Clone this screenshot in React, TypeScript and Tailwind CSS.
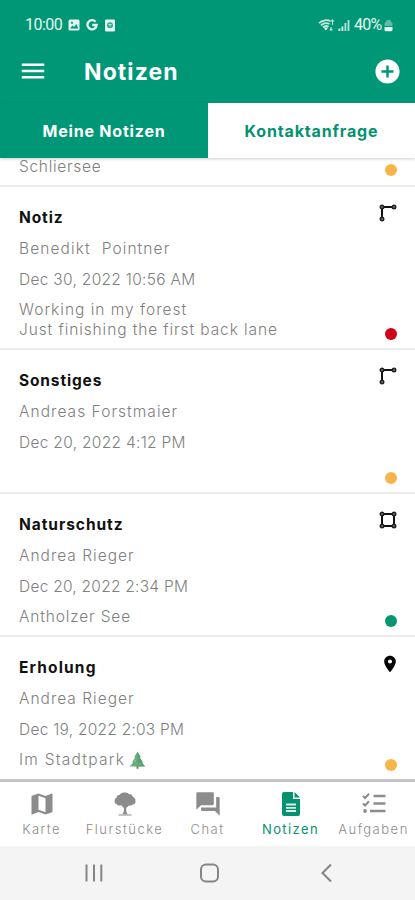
import React from 'react';
import { MdAddCircle, MdForum, MdLocationOn, MdMap, MdMenu } from 'react-icons/md';

interface Note {
  title: string;
  titleClass: string;
  author: string;
  authorClass: string;
  date: string;
  dateClass: string;
  lines: { text: string; className: string; tree?: boolean }[];
  shape: 'line' | 'area' | 'point';
  dot: string;
  height: string;
}

const notes: Note[] = [
  {
    title: 'Notiz',
    titleClass: 'tracking-[0.9px]',
    author: 'Benedikt  Pointner',
    authorClass: 'tracking-[1.1px]',
    date: 'Dec 30, 2022 10:56 AM',
    dateClass: 'tracking-[0.3px]',
    lines: [
      { text: 'Working in my forest', className: 'tracking-[1px]' },
      { text: 'Just finishing the first back lane', className: 'tracking-[0.9px]' },
    ],
    shape: 'line',
    dot: 'bg-[#d00018]',
    height: 'h-[163px]',
  },
  {
    title: 'Sonstiges',
    titleClass: 'tracking-[0.85px]',
    author: 'Andreas Forstmaier',
    authorClass: 'tracking-[1.05px]',
    date: 'Dec 20, 2022 4:12 PM',
    dateClass: 'tracking-[0.3px]',
    lines: [],
    shape: 'line',
    dot: 'bg-[#f9b54c]',
    height: 'h-[144px]',
  },
  {
    title: 'Naturschutz',
    titleClass: 'tracking-[0.95px]',
    author: 'Andrea Rieger',
    authorClass: 'tracking-[1px]',
    date: 'Dec 20, 2022 2:34 PM',
    dateClass: 'tracking-[0.25px]',
    lines: [{ text: 'Antholzer See', className: 'tracking-[0.85px]' }],
    shape: 'area',
    dot: 'bg-[#04976f]',
    height: 'h-[143px]',
  },
  {
    title: 'Erholung',
    titleClass: 'tracking-[1.15px]',
    author: 'Andrea Rieger',
    authorClass: 'tracking-[1px]',
    date: 'Dec 19, 2022 2:03 PM',
    dateClass: 'tracking-[0.25px]',
    lines: [{ text: 'Im Stadtpark', className: 'tracking-[1.25px]', tree: true }],
    shape: 'point',
    dot: 'bg-[#f9b54c]',
    height: 'h-[144px]',
  },
];

const StatusBar: React.FC = () => (
  <div className="flex h-[50px] items-center justify-between pl-[25px] pr-[22px] font-[Roboto,sans-serif] text-[16px] text-[#e4f6f0]">
    <div className="flex items-center">
      <span className="w-[38px] tracking-[-0.5px]">10:00</span>
      <svg className="ml-[5px] h-3 w-[12px]" viewBox="0 0 12 12">
        <rect x="0.5" y="0.5" width="11" height="11" rx="1.5" fill="currentColor" />
        <path d="M2 9.5 4.5 6.5 6 8 8.3 5 10.3 9.5Z" fill="#009777" />
        <circle cx="4" cy="3.8" r="1.1" fill="#009777" />
      </svg>
      <svg className="ml-[6px] h-3 w-[12px]" viewBox="0 0 12 12">
        <path d="M9.6 2.7A4.6 4.6 0 1 0 10.7 6H6.2" fill="none" stroke="currentColor" strokeWidth="2.3" />
      </svg>
      <svg className="ml-[6px] h-[13px] w-[12px]" viewBox="0 0 12 13">
        <rect x="1" y="0.5" width="10" height="12" rx="1.2" fill="currentColor" />
        <circle cx="6" cy="6.2" r="3" fill="#27a78b" />
        <path d="M4.3 5.6h3.4M6 4.6v3.2" stroke="#e4f6f0" strokeWidth="0.8" />
      </svg>
    </div>
    <div className="flex items-center">
      <svg className="h-[14px] w-[17px]" viewBox="0 0 17 14">
        <path d="M1 5.2C4.5 1.8 9.5 1.5 12.5 3.2M3 7.3C6 4.7 9 4.6 11.5 6M5 9.3c2-1.6 4-1.6 5.5-.5" fill="none" stroke="currentColor" strokeWidth="1.8" opacity=".85" />
        <path d="m5.5 9.5 2.4 3 2.2-3Z" fill="currentColor" />
        <path d="M14.5 2v5M13 3.5l1.5-1.7L16 3.5M13 9v3M11.8 10.8 13 12.4l1.3-1.6" fill="none" stroke="currentColor" strokeWidth="1.1" opacity=".8" />
      </svg>
      <svg className="ml-[3px] h-[12px] w-[12px]" viewBox="0 0 12 12">
        <path d="M.5 9.5h1.8V12H.5zM3.5 7.5h1.8V12H3.5z" fill="currentColor" />
        <path d="M6.5 4h1.8v8H6.5zM9.6 1h1.8v11H9.6z" fill="currentColor" opacity=".8" />
      </svg>
      <span className="ml-[4px] w-[30px] tracking-[-0.8px]">40%</span>
      <svg className="h-[13px] w-[9px]" viewBox="0 0 9 13">
        <path d="M.5 7V4.5L2.5 2V1h4v1l2 2.500V7Z" fill="currentColor" opacity=".4" />
        <path d="M.5 8h8v2.800a1.500 1.500 0 0 1-1.500 1.500H2A1.500 1.500 0 0 1 .5 10.800Z" fill="currentColor" />
      </svg>
    </div>
  </div>
);

const ShapeIcon: React.FC<{ shape: Note['shape'] }> = ({ shape }) => {
  if (shape === 'point') {
    return <MdLocationOn className="-mr-[3px] h-5 w-5 text-black" />;
  }
  const isArea = shape === 'area';
  return (
    <svg className="h-[18px] w-[18px]" viewBox="0 0 18 18" fill="none" stroke="#111">
      <path d={isArea ? 'M3 3H15V15H3Z' : 'M15 3H3V15'} strokeWidth="2" />
      <g fill="#666" stroke="#222" strokeWidth="1.4">
        <circle cx="3" cy="3" r="1.8" />
        <circle cx="15" cy="3" r="1.8" />
        <circle cx="3" cy="15" r="1.8" />
        {isArea && <circle cx="15" cy="15" r="1.8" />}
      </g>
    </svg>
  );
};

const PineTree: React.FC = () => (
  <svg className="ml-[4px] inline-block h-[18px] w-[17px] align-[-4px]" viewBox="0 0 17 18">
    <path d="M7.5 14h2v3.7h-2z" fill="#8d7056" />
    <path d="M8.500.5 11.700 6l-1 .2 3.300 5-1.200.2 3.400 4.100H.8l3.400-4.100-1.200-.2 3.300-5-1-.2Z" fill="#67ad82" />
    <path d="M8.500 1v14.500H16L12.800 11.400l1-.2-3.100-5 1-.2Z" fill="#4c966c" opacity=".55" />
    <circle cx="6" cy="10" r=".8" fill="#d2bd68" />
    <circle cx="10.5" cy="13" r=".8" fill="#d2bd68" />
  </svg>
);

const NoteRow: React.FC<{ note: Note }> = ({ note }) => (
  <div className={`flex shrink-0 justify-between border-b-2 border-[#ececec] pl-[19px] pr-[18px] ${note.height}`}>
    <div className="whitespace-pre pt-[15px] text-[15.5px] font-light leading-[31px] text-[#808080]">
      <h2 className={`text-[15.5px] font-bold text-[#111] ${note.titleClass}`}>{note.title}</h2>
      <p className={note.authorClass}>{note.author}</p>
      <p className={note.dateClass}>{note.date}</p>
      <div className="pt-[5px] leading-5">
        {note.lines.map((line) => (
          <p key={line.text} className={line.className}>
            {line.text}
            {line.tree && <PineTree />}
          </p>
        ))}
      </div>
    </div>
    <div className="flex flex-col items-end justify-between pb-[8px] pt-[17px]">
      <ShapeIcon shape={note.shape} />
      <span className={`h-[12px] w-[12px] rounded-full ${note.dot}`} />
    </div>
  </div>
);

const TreeIcon: React.FC = () => (
  <svg className="h-6 w-6" viewBox="0 0 24 24" fill="currentColor">
    <path d="M12 .5c1.8-.3 3.2.5 3.8 1.6 2-.2 3.8.9 4 2.8 1.8.6 2.9 2 2.6 3.8.6 1.8-.6 3.4-2.3 3.6-1.2 1.3-3 1.7-4.3 1.2L13.2 16c-.1 2.5.2 4.5 1.6 6.3H9.2c1.5-1.7 1.9-3.5 1.7-6.2l-3-3.2c-1.3 1-3.4.5-4-.7-1.7-.3-2.7-1.6-2.2-3.1C1.300 7.400 2.300 6.200 3.600 5.700 3.500 3.900 5 2.700 6.800 2.700 7.900 1 10 .2 12 .5Z" />
    <path d="M5.500 23h13" stroke="currentColor" strokeWidth="1" />
  </svg>
);

const FileIcon: React.FC = () => (
  <svg className="h-[26px] w-[20px]" viewBox="0 0 20 26">
    <path d="M3 1h9v7h7v15a2 2 0 0 1-2 2H3a2 2 0 0 1-2-2V3a2 2 0 0 1 2-2Z" fill="currentColor" />
    <path d="M13.500 1 19 6.500h-5.500Z" fill="currentColor" />
    <path d="M5 13.500h10M5 16.800h10M5 20h10" stroke="#d5eee6" strokeWidth="1.8" />
  </svg>
);

const TasksIcon: React.FC = () => (
  <svg className="h-6 w-6" viewBox="0 0 24 24" fill="none" stroke="currentColor">
    <path d="M11.500 4H23.500M11.500 11.500H23.500M8 19H23.500" strokeWidth="2.400" />
    <path d="m1 4 2 2 4-4.300M1 11.500l2 2 4-4.300" strokeWidth="2" />
    <circle cx="3" cy="19" r="1.900" fill="currentColor" stroke="none" />
  </svg>
);

const navItems = [
  { label: 'Karte', className: 'tracking-[1.4px]', icon: <MdMap className="h-7 w-7" /> },
  { label: 'Flurstücke', className: 'tracking-[1.5px]', icon: <TreeIcon /> },
  { label: 'Chat', className: 'tracking-[1.5px]', icon: <MdForum className="h-7 w-7" /> },
  { label: 'Notizen', className: 'tracking-[1.4px]', icon: <FileIcon />, active: true },
  { label: 'Aufgaben', className: 'tracking-[1.5px]', icon: <TasksIcon /> },
];

const App: React.FC = () => {
  return (
    <div className="flex h-[900px] w-[415px] flex-col overflow-hidden bg-white font-[Inter,sans-serif]">
      {/* Header */}
      <header className="h-[103px] shrink-0 bg-[#009777] text-white">
        <StatusBar />
        <div className="flex h-[42px] items-center pl-[18px] pr-[13px]">
          <MdMenu className="h-[30px] w-[30px]" />
          <h1 className="ml-[36px] mt-[2px] text-[23px] font-bold tracking-[1.1px]">Notizen</h1>
          <MdAddCircle className="ml-auto h-[29px] w-[29px]" />
        </div>
      </header>

      {/* Tabs */}
      <div className="z-10 flex h-[55px] shrink-0 text-[16px] font-bold shadow-[0_1px_3px_rgba(0,0,0,0.2)]">
        <div className="flex w-[208px] items-center justify-center bg-[#009777] text-white">
          <span className="tracking-[0.8px]">Meine Notizen</span>
        </div>
        <div className="flex flex-1 items-center justify-center bg-white text-[#049270]">
          <span className="tracking-[0.85px]">Kontaktanfrage</span>
        </div>
      </div>

      {/* Notes list */}
      <div className="flex h-[621px] shrink-0 flex-col overflow-hidden">
        <div className="flex h-[29px] shrink-0 justify-between border-b-2 border-[#ececec] pl-[19px] pr-[18px]">
          <p className="text-[15.5px] font-light leading-[17px] tracking-[0.7px] text-[#808080]">Schliersee</p>
          <span className="mt-[6px] h-[12px] w-[12px] rounded-full bg-[#f9b54c]" />
        </div>
        {notes.map((note) => (
          <NoteRow key={note.title} note={note} />
        ))}
      </div>

      {/* Bottom navigation */}
      <nav className="flex h-[67px] shrink-0 border-t-[3px] border-[#c4c4c4]">
        {navItems.map((item) => (
          <div
            key={item.label}
            className={`flex w-[83px] flex-col items-center pt-[7px] ${item.active ? 'text-[#049270]' : 'text-[#8c8c8c]'}`}
          >
            <div className="flex h-[29px] items-center">{item.icon}</div>
            <span className={`mt-[3px] text-[13px] leading-4 ${item.active ? '' : 'font-light'} ${item.className}`}>
              {item.label}
            </span>
          </div>
        ))}
      </nav>

      {/* System navigation */}
      <div className="flex flex-1 items-center bg-[#f4f4f4] text-[#858585]">
        <svg className="ml-[84px] h-5 w-5" viewBox="0 0 20 20" stroke="currentColor" strokeWidth="2">
          <path d="M2.500 1.500v17M10 1.500v17M17.300 1.500v17" />
        </svg>
        <svg className="ml-[95px] h-5 w-5" viewBox="0 0 20 20" fill="none" stroke="currentColor" strokeWidth="2">
          <rect x="2" y="1.500" width="17" height="17" rx="5" />
        </svg>
        <svg className="ml-[98px] h-5 w-5" viewBox="0 0 20 20" fill="none" stroke="currentColor" strokeWidth="2">
          <path d="m14 1.500-8.500 8.500 8.500 8.500" />
        </svg>
      </div>
    </div>
  );
};

export default App;
